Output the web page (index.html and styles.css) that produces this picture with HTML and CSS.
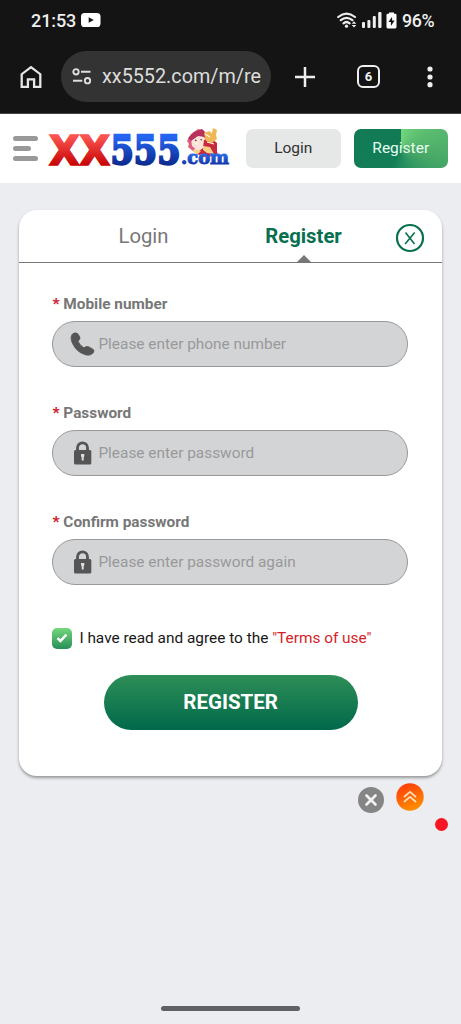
FILE: index.html
```html
<!DOCTYPE html>
<html lang="en">
<head>
<meta charset="utf-8">
<meta name="viewport" content="width=device-width">
<title>XX555 Register</title>
<link rel="stylesheet" href="styles.css">
</head>
<body>
<div class="browser">
  <div class="status">
    <span class="clock">21:53</span>
    <svg class="youtube" width="20" height="14" viewBox="0 0 20 14"><rect width="19.5" height="14" rx="3.6" fill="#fff"/><path d="M7.7 4.2 12.8 7 7.7 9.8z" fill="#141414"/></svg>
    <span class="spacer"></span>
    <svg class="wifi" width="20" height="17" viewBox="0 0 20 17" fill="none" stroke="#eee" stroke-linecap="round"><path d="M1.2 5Q9.5-1.7 18 5M3.8 8.2Q9.5 3.4 15.4 8.2M6.5 11.3Q9.5 8.7 12.6 11.3" stroke-width="2.2"/><circle cx="9.5" cy="14.2" r="1.6" fill="#eee" stroke="none"/><path d="m14.7 11.700 2.300-2.500 2.300 2.500zM14.700 13l2.300 2.500 2.300-2.500z" fill="#eee" stroke="none"/></svg>
    <svg class="signal" width="20" height="16" viewBox="0 0 20 16" fill="#eee"><rect y="10" width="3" height="6" rx="1"/><rect x="5.4" y="8" width="3" height="8" rx="1"/><rect x="10.8" y="4" width="3" height="12" rx="1"/><rect x="16.2" width="3.3" height="16" rx="1"/></svg>
    <svg class="battery" width="11" height="17" viewBox="0 0 11 17"><path d="M3 1.8V.5h5v1.3h1.2q1.3 0 1.3 1.3v12q0 1.3-1.3 1.3H1.8Q.5 16.400.5 15.100V3.100Q.5 1.800 1.800 1.800z" fill="#fff"/><path d="M6.100 4.700 2.500 9.900h2.400v4L8.600 8.500H6.100z" fill="#141414"/></svg>
    <span class="charge">96%</span>
  </div>
  <div class="toolbar">
    <svg class="home" width="22" height="24" viewBox="0 0 22 24" fill="none" stroke="#e6e6e6" stroke-width="2.3"><path d="M1.700 21.800V9.200L11 2.200l9.300 7v12.600h-6.200v-7.500H7.900v7.500z"/></svg>
    <div class="address">
      <svg width="20" height="17" viewBox="0 0 20 17" fill="none" stroke="#ddd" stroke-width="1.900"><circle cx="4" cy="3.800" r="2.700"/><path d="M9 3.800h9.500M1 12.700h9.300"/><circle cx="15.500" cy="12.700" r="2.700"/></svg>
      <span>xx5552.com/m/re</span>
    </div>
    <svg class="plus" width="20" height="20" viewBox="0 0 20 20" stroke="#eee" stroke-width="2.500"><path d="M10 0v20M0 10h20"/></svg>
    <div class="tabs-count">6</div>
    <svg class="more" width="6" height="22" viewBox="0 0 6 22" fill="#eee"><circle cx="3" cy="3" r="2.600"/><circle cx="3" cy="11" r="2.600"/><circle cx="3" cy="18.700" r="2.600"/></svg>
  </div>
</div>

<header class="site-header">
  <div class="menu"><i></i><i class="short"></i><i></i></div>
  <svg class="logo" width="184" height="64" viewBox="0 0 184 64">
    <defs>
      <linearGradient id="red" x1="0" y1="0" x2="0" y2="1"><stop offset=".2" stop-color="#fa5350"/><stop offset=".8" stop-color="#c80505"/></linearGradient>
      <linearGradient id="blue" x1="0" y1="0" x2="0" y2="1"><stop offset=".2" stop-color="#2466f2"/><stop offset=".8" stop-color="#0c2c91"/></linearGradient>
      <linearGradient id="blue-small" x1="0" y1="0" x2="0" y2="1"><stop offset=".3" stop-color="#2a6ce8"/><stop offset=".8" stop-color="#1238a8"/></linearGradient>
    </defs>
    <g transform="translate(3 13)">
      <path d="m138 15-2-3 4-7 7-5 5 1 4 5-2 7-7 4-5 5-5-4z" fill="#e05c7c"/>
      <path d="m140 10 9-4 5 3-1 9-6 4-6-5z" fill="#fbe3da"/>
      <path d="m137 9 6-6 8-3 3 3 1 5-8-1-7 5z" fill="#b8305c"/>
      <path d="m153 11 8-1 5 4 0 8 1 5-16 1-6-4 7-5z" fill="#c9283d"/>
      <path d="m153 4 5-2 3 2 1-5 4 2-1 5 1 4-5 4-6-2z" fill="#efb856"/>
      <path d="m152 17 7 1 4 7-7-1-4-3zM143 20l7 2-3 3-5-2z" fill="#f8cf83"/>
      <path d="m154 5 5 3m-15 6 4 1m8-2 7 2" stroke="#fff3d7" stroke-width="1.300"/>
      <path d="m144 11 1.500.8m4-1.300 1.500.5" stroke="#692338" stroke-width="1.300"/>
    </g>
    <text class="logo-text wide" x="1" y="48.800" font-size="40" textLength="61" lengthAdjust="spacingAndGlyphs" fill="url(#red)" stroke="url(#red)" stroke-width="1.700">XX</text>
    <text class="logo-text" x="62.500" y="48" font-size="38.500" textLength="70" lengthAdjust="spacingAndGlyphs" fill="url(#blue)" stroke="url(#blue)" stroke-width="2.300">555</text>
    <text class="logo-text" x="133" y="48.300" font-size="18" textLength="48" lengthAdjust="spacingAndGlyphs" fill="url(#blue-small)" stroke="url(#blue-small)" stroke-width="1">.com</text>
  </svg>
  <button class="head-button">Login</button>
  <button class="head-button head-register">Register</button>
</header>

<main class="page">
  <section class="card">
    <nav class="tabs">
      <span class="tab">Login</span>
      <span class="tab active">Register</span>
      <svg class="close" width="30" height="30" viewBox="0 0 30 30" fill="none" stroke="#08704f"><circle cx="15" cy="15" r="13" stroke-width="2.200"/><path d="m10.500 9.500 9 11.500M19.700 9.500l-9.600 11.500" stroke-width="1.600"/></svg>
    </nav>
    <form class="form">
      <div class="field">
        <label><b>*</b> Mobile number</label>
        <div class="input"><svg width="25" height="24" viewBox="0 0 25 24"><path d="M2.300 2.200Q5.500-.4 8 2L9.900 5.300Q10.500 7.500 8 9 9.500 13.300 14 15.800 16.200 13.800 18.500 14.700L22.700 17Q25.100 18.700 23.100 21 20.500 24 15.500 22.800 7 20.500 2.800 12-.4 5.500 2.300 2.200z" fill="#555" stroke="#555" stroke-width=".8"/></svg><span>Please enter phone number</span></div>
      </div>
      <div class="field">
        <label><b>*</b> Password</label>
        <div class="input"><svg width="25" height="24" viewBox="0 0 25 24"><path d="M7.500 10V6.800a5 5 0 0 1 10 0V10" fill="none" stroke="#555" stroke-width="2.800"/><rect x="4" y="9" width="17.300" height="14.500" rx="1.500" fill="#555"/><path d="M11 13h3.300v2l-.6 1.500V19.500h-2v-3L11 15z" fill="#ddd"/></svg><span>Please enter password</span></div>
      </div>
      <div class="field">
        <label><b>*</b> Confirm password</label>
        <div class="input"><svg width="25" height="24" viewBox="0 0 25 24"><path d="M7.500 10V6.800a5 5 0 0 1 10 0V10" fill="none" stroke="#555" stroke-width="2.800"/><rect x="4" y="9" width="17.300" height="14.500" rx="1.500" fill="#555"/><path d="M11 13h3.300v2l-.6 1.500V19.500h-2v-3L11 15z" fill="#ddd"/></svg><span>Please enter password again</span></div>
      </div>
      <div class="agree">
        <span class="check"><svg width="12" height="10" viewBox="0 0 12 10" fill="none" stroke="#fff" stroke-width="2.500"><path d="M1.500 5.200 4.400 8l6-6.300"/></svg></span>
        <span>I have read and agree to the <em>"Terms of use"</em></span>
      </div>
      <button class="submit" type="button">REGISTER</button>
    </form>
  </section>
  <div class="floating">
    <svg class="dismiss" width="26" height="26" viewBox="0 0 26 26"><circle cx="13" cy="13" r="13" fill="#858585"/><path d="m8.500 8.500 9 9m0-9-9 9" stroke="#f3f3f3" stroke-width="2.600" stroke-linecap="round"/></svg>
    <svg class="top" width="28" height="28" viewBox="0 0 28 28"><defs><linearGradient id="orange" x1=".3" y1="0" x2=".7" y2="1"><stop stop-color="#ff3c08"/><stop offset="1" stop-color="#ff9300"/></linearGradient></defs><circle cx="14" cy="14" r="13.700" fill="url(#orange)"/><path d="m8 14 6-5.200 6 5.200M8 19l6-5.200 6 5.200" fill="none" stroke="#ffe0bd" stroke-width="1.700"/></svg>
    <i class="dot"></i>
  </div>
  <div class="gesture"></div>
</main>
</body>
</html>
```

FILE: styles.css
```css
* { box-sizing: border-box; }
body { margin: 0; width: 461px; height: 1024px; display: flex; flex-direction: column; overflow: hidden; background: #ebedf1; font-family: Roboto, "Liberation Sans", sans-serif; }
svg { display: block; flex: none; }
button { border: 0; padding: 0; font-family: inherit; }
.browser { height: 114px; background: #141414; border-bottom: 1px solid #444; color: #eee; }
.status { height: 40px; display: flex; align-items: center; padding: 0 26px 0 31px; font-size: 18px; font-weight: 500; }
.clock { width: 50px; letter-spacing: -.1px; }
.spacer { flex: 1; }
.signal { margin-left: 5px; }
.battery { margin: 0 5px 0 4px; }
.charge { width: 33px; font-size: 17.800px; letter-spacing: -.3px; }
.toolbar { height: 73px; display: flex; align-items: center; padding: 0 28px 0 20px; }
.address { width: 210px; height: 51px; margin-left: 19px; padding-left: 11px; border-radius: 26px; background: #333; display: flex; align-items: center; gap: 10px; font-size: 19.800px; color: #ddd; white-space: nowrap; overflow: hidden; }
.plus { margin-left: 24px; }
.tabs-count { width: 23px; height: 23px; margin-left: 42px; border: 2.500px solid #eee; border-radius: 6px; display: flex; align-items: center; justify-content: center; font-size: 13px; font-weight: 700; }
.more { margin-left: auto; }
.site-header { height: 69px; background: #fff; display: flex; align-items: center; padding: 0 13px 1px; }
.menu { width: 25px; height: 25px; display: flex; flex-direction: column; justify-content: space-between; }
.menu i { height: 5px; width: 25px; border-radius: 3px; background: #999; }
.menu .short { width: 18px; }
.logo { margin-left: 10px; }
.logo-text { font-family: "DejaVu Serif", serif; font-weight: 700; }
.logo-text.wide { font-family: "DejaVu Sans", sans-serif; }
.head-button { width: 95px; height: 39px; margin-left: 14px; border-radius: 7px; background: #e6e8e7; color: #333; font-size: 15.500px; }
.head-register { margin-left: 13px; color: #e6fff0; background: conic-gradient(from 0deg at 50% 50%, #72d67b, #4aaa68 28%, #299261 45%, #127e57 58%, #127955); }
.page { flex: 1; display: flex; flex-direction: column; padding-top: 27px; }
.card { width: 423px; height: 566px; margin-left: 19px; border-radius: 18px; background: #fff; box-shadow: 0 2px 3px #999; }
.tabs { height: 53px; display: grid; grid-template-columns: 204px 161px 1fr; border-bottom: 1.500px solid #777; }
.tab { display: flex; justify-content: center; align-items: center; color: #777; font-size: 20.300px; }
.tab:first-child { padding-left: 45px; }
.tab.active { color: #08704f; font-weight: 700; position: relative; }
.active::after { content: ""; position: absolute; bottom: 0; border: 7px solid transparent; border-top: 0; border-bottom-color: #777; }
.close { align-self: center; margin-left: 11px; margin-top: 3px; }
.form { padding: 30.200px 33.400px 0; }
.field { height: 108.800px; }
.field label { display: block; height: 28px; line-height: 23px; color: #777; font-size: 15.350px; font-weight: 700; }
.field b { color: #cc2530; }
.input { width: 356px; height: 46px; border: 1.300px solid #999; border-radius: 23px; background: #d3d4d6; display: flex; align-items: center; padding-left: 17px; gap: 3px; color: #999; font-size: 15.400px; }
.agree { display: flex; align-items: center; gap: 7px; height: 23px; margin-top: 7px; font-size: 15.400px; color: #171717; white-space: nowrap; }
.agree em { color: #d41d28; font-style: normal; }
.check { width: 20px; height: 21px; border-radius: 5px; background: linear-gradient(#75d77b, #288f59); display: grid; place-items: center; }
.submit { display: block; width: 254px; height: 55px; margin: 25px 0 0 51.200px; border-radius: 28px; background: linear-gradient(#2e8e57, #00694b); color: #fff; font-size: 20.500px; font-weight: 700; }
.floating { height: 60px; display: flex; align-items: flex-start; padding: 11px 12px 0 358px; }
.top { margin: -4px 0 0 12px; }
.dot { width: 13px; height: 13px; border-radius: 50%; background: #f71622; margin: 31px 0 0 11px; }
.gesture { width: 139px; height: 5px; border-radius: 3px; background: #606166; margin: auto 0 13px 161px; }
```
